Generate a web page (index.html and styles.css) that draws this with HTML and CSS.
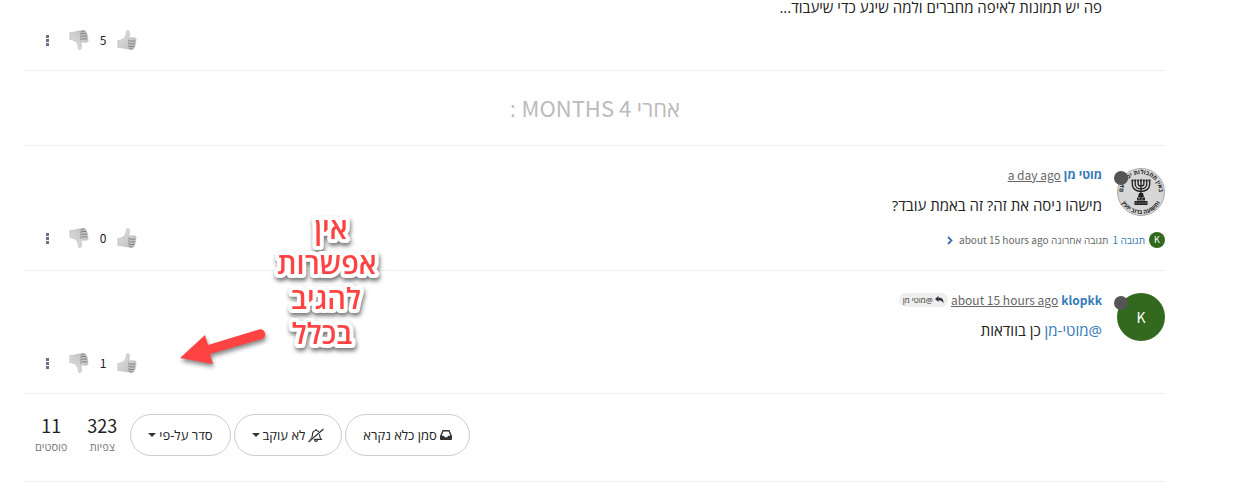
FILE: index.html
```html
<!DOCTYPE html>
<html lang="he" dir="rtl">
<head>
<meta charset="utf-8">
<title>פורום</title>
<link rel="stylesheet" href="styles.css">
</head>
<body>
<svg class="defs" aria-hidden="true">
  <defs>
    <linearGradient id="shade" x1="0" y1="0" x2="1" y2="1">
      <stop offset="0" stop-color="#e2e2e2"/><stop offset="1" stop-color="#bcbcbc"/>
    </linearGradient>
    <symbol id="thumb" viewBox="0 0 20 20">
      <path d="M.8 10.5c2-.3 4-.8 5.4-1.8C8 7.300 9.200 5 9.300 2.300 9.300.8 10 .3 10.800.4c1.400.2 2 1.600 1.800 3.400-.1 1.400-.6 2.700-.9 3.900l5.600.1c1.400.1 2 .9 1.900 1.900 0 .8-.4 1.200-.9 1.400.6.3.8.8.7 1.500-.1.700-.5 1.100-1 1.300.4.3.5.800.4 1.400-.1.700-.5 1-1 1.200.3.4.3.800.1 1.300-.4 1-1.200 1.300-2.600 1.300-3.600.1-6.500 0-8.700-1.100L.8 17.600z" fill="url(#shade)" stroke="#b5b5b5" stroke-width=".5"/>
      <path d="M18.200 11.100h-5.400c-1.100 0-1.500-.6-1.400-1.400M18 13.900h-5.200c-.9 0-1.300-.6-1.200-1.500M17.300 16.500h-4.500c-.8 0-1.200-.5-1.100-1.300M12 17.500c.2 1 .6 1.400 1.400 1.500h2.400" fill="none" stroke="#777" stroke-width=".9"/>
    </symbol>
  </defs>
</svg>

<main class="topic">
  <article class="post post-first">
    <p class="post-text">פה יש תמונות לאיפה מחברים ולמה שיגע כדי שיעבוד...</p>
    <footer class="post-footer">
      <div class="actions">
        <button class="icon-btn" aria-label="אהבתי"><svg class="thumb"><use href="#thumb"/></svg></button>
        <span class="votes">5</span>
        <button class="icon-btn" aria-label="לא אהבתי"><svg class="thumb thumb-down"><use href="#thumb"/></svg></button>
        <button class="icon-btn more" aria-label="עוד"><i></i><i></i><i></i></button>
      </div>
    </footer>
  </article>

  <h2 class="time-gap">אחרי <span class="latin">4 MONTHS</span> :</h2>

  <article class="post">
    <div class="avatar">
      <svg class="emblem" viewBox="0 0 48 48" aria-hidden="true">
        <circle cx="24" cy="24" r="23.500" fill="#d6d6d6" stroke="#aaa"/>
        <path id="ringTop" d="M9 34A18 18 0 1 1 39 34" fill="none"/>
        <path id="ringBottom" d="M2 24A22 22 0 0 0 46 24" fill="none"/>
        <text class="ring-text"><textPath href="#ringTop" startOffset="50%">באין תחבולות יפול עם</textPath></text>
        <text class="ring-text"><textPath href="#ringBottom" startOffset="50%">ותשועה ברוב יועץ</textPath></text>
        <g fill="none" stroke="#222" stroke-width="1.300">
          <path d="M15.300 12v4c0 10 17.400 10 17.400 0v-4M18.200 12v4c0 6.500 11.600 6.500 11.600 0v-4M21.100 12v3.500c0 3.500 5.800 3.500 5.800 0V12M24 11.500V32"/>
          <path d="M14.500 12.300H33.500" stroke-dasharray="2 .8" stroke-width="1.800"/>
        </g>
        <path d="M22 25h4l1 4h-6zM20 29.500h8v3h-8zM17.500 33h13v4h-13z" fill="#222"/>
        <path d="M18.500 35h11M21 31h6" stroke="#aaa" stroke-width=".7" stroke-dasharray="2 1"/>
      </svg>
      <span class="status"></span>
    </div>
    <div class="post-body">
      <header class="post-head">
        <a class="author" href="#">מוטי מן</a>
        <a class="when latin" href="#">a day ago</a>
      </header>
      <p class="post-text">מישהו ניסה את זה? זה באמת עובד?</p>
    </div>
    <footer class="post-footer">
      <a class="replies" href="#">
        <span class="mini-avatar latin">K</span>
        <span class="reply-count">תגובה <span class="latin">1</span></span>
        <span class="reply-last">תגובה אחרונה <span class="latin">about 15 hours ago</span></span>
        <svg class="chevron" viewBox="0 0 6 9"><path d="M1 1l3.500 3.500L1 8" fill="none" stroke="#3a6fb0" stroke-width="1.800"/></svg>
      </a>
      <div class="actions">
        <button class="icon-btn" aria-label="אהבתי"><svg class="thumb"><use href="#thumb"/></svg></button>
        <span class="votes">0</span>
        <button class="icon-btn" aria-label="לא אהבתי"><svg class="thumb thumb-down"><use href="#thumb"/></svg></button>
        <button class="icon-btn more" aria-label="עוד"><i></i><i></i><i></i></button>
      </div>
    </footer>
  </article>

  <article class="post">
    <div class="avatar avatar-letter latin">K<span class="status"></span></div>
    <div class="post-body">
      <header class="post-head">
        <a class="author latin" href="#">klopkk</a>
        <a class="when latin" href="#">about 15 hours ago</a>
        <a class="reply-to" href="#"><svg class="reply-icon" viewBox="0 0 9 8"><path d="M0 3L3.500 0v1.800C7 1.800 9 3 8.300 7.500 7.500 5 6 4.300 3.500 4.300V6z" fill="#333"/></svg><span>@מוטי מן</span></a>
      </header>
      <p class="post-text"><a class="mention" href="#">@מוטי-מן</a> כן בוודאות</p>
    </div>
    <footer class="post-footer">
      <div class="actions">
        <button class="icon-btn" aria-label="אהבתי"><svg class="thumb"><use href="#thumb"/></svg></button>
        <span class="votes">1</span>
        <button class="icon-btn" aria-label="לא אהבתי"><svg class="thumb thumb-down"><use href="#thumb"/></svg></button>
        <button class="icon-btn more" aria-label="עוד"><i></i><i></i><i></i></button>
      </div>
    </footer>
  </article>

  <div class="topic-bar">
    <div class="tools">
      <button class="pill"><svg class="inbox" viewBox="0 0 12 10"><path fill-rule="evenodd" d="M2.500 0h7L12 6v3.200a.8.8 0 0 1-.8.8H.8a.8.8 0 0 1-.8-.8V6zM3.300 1.500L1.700 5.700h2.200l.8 1.600h2.600l.8-1.600h2.200L8.700 1.500z" fill="#333"/></svg>סמן כלא נקרא</button>
      <button class="pill"><svg class="bell" viewBox="0 0 16 15"><path d="M2.800 11.300C4.500 9.800 4.500 8 4.500 6.300 4.600 4 6 2.700 8 2.500s3.400 1.600 3.500 3.800c0 2 .2 3.500 1.700 5zM8 2.500V1M6.700 12c.1 1.700 2.500 1.700 2.600 0" fill="none" stroke="#333" stroke-width="1.200"/><path d="M1 14.200L15.200 1.400" stroke="#fff" stroke-width="2.500"/><path d="M.5 14L15.500 1" stroke="#333" stroke-width="1.300"/></svg>לא עוקב<i class="caret"></i></button>
      <button class="pill">סדר על-פי<i class="caret"></i></button>
    </div>
    <div class="stats">
      <div class="stat"><span class="stat-num latin">323</span><span class="stat-label">צפיות</span></div>
      <div class="stat"><span class="stat-num latin">11</span><span class="stat-label">פוסטים</span></div>
    </div>
  </div>
</main>

<svg class="note" viewBox="0 0 120 160" role="img">
  <text x="64" y="34">אין</text>
  <text x="60" y="69">אפשרות</text>
  <text x="59" y="104">להגיב</text>
  <text x="55" y="139">בכלל</text>
</svg>
<svg class="arrow" viewBox="0 0 100 50" aria-hidden="true"><path d="M4 30L29 7l3 10L83 1.500a5 5 0 0 1 3 9.500L34 26l3 10z" fill="#ff4343"/></svg>
</body>
</html>
```
FILE: styles.css
```css
* { box-sizing: border-box; }
body {
  margin: 0;
  background: #fff;
  color: #222;
  font: 14px/20px "Open Sans", "Noto Sans", sans-serif;
  position: relative;
}
p, h2 { margin: 0; }
a { color: #337ab7; text-decoration: none; }
button { font: inherit; color: inherit; background: none; border: 0; padding: 0; cursor: pointer; }
svg { display: block; flex: none; }
.defs { position: absolute; width: 0; height: 0; }
.latin { font-family: "Noto Sans CJK SC", "Noto Sans", sans-serif; }

.topic { padding: 0 80px 0 25px; }
.post {
  display: grid;
  grid-template-columns: 48px 1fr;
  column-gap: 15px;
  padding: 19px 0 20px;
  border-bottom: 1px solid #eee;
}
.post-text { font-size: 15px; margin-top: 10px; }
.post-first { padding-top: 0; }
.post-first .post-text { grid-column: 2; line-height: 15px; margin: 0 0 2px; }
.post-footer {
  grid-column: 1 / -1;
  display: flex;
  align-items: flex-start;
  margin-top: 13px;
}
.actions { display: flex; align-items: center; gap: 9px; margin: 0 auto 0 20px; height: 20px; }
.votes { width: 10px; text-align: center; font: 12px/20px "Noto Sans CJK SC", sans-serif; }
.thumb { width: 20px; height: 20px; }
.thumb-down { transform: scaleY(-1); }
.more { display: flex; flex-direction: column; align-items: center; gap: 1px; width: 5px; margin-right: 10px; }
.more i { width: 3px; height: 3px; background: #6a6f8c; }

.time-gap {
  padding: 24px 0;
  border-bottom: 1px solid #eee;
  text-align: center;
  font-size: 22px;
  line-height: 25px;
  font-weight: 400;
  color: #bbb;
}

.avatar { position: relative; width: 48px; height: 48px; margin-top: 3px; margin-bottom: -5px; border-radius: 50%; }
.emblem { width: 48px; height: 48px; }
.ring-text { font: 700 6px "Open Sans", sans-serif; fill: #222; text-anchor: middle; }
.avatar-letter { background: #33691e; color: #fff; font-size: 14px; line-height: 48px; text-align: center; }
.status { position: absolute; top: 3px; left: -3px; width: 14px; height: 14px; border-radius: 50%; background: #555; }
.post-head { display: flex; align-items: center; gap: 3px; height: 20px; font-size: 12px; }
.author { font-weight: 700; }
.when { color: #666; text-decoration: underline; }
.reply-to {
  display: flex;
  align-items: center;
  gap: 2px;
  padding: 0 4px;
  border-radius: 7px;
  background: #eee;
  color: #333;
  font-size: 8px;
  line-height: 14px;
}
.reply-icon { width: 9px; height: 8px; }

.replies { display: flex; align-items: center; gap: 4px; padding-top: 2px; font-size: 10px; }
.mini-avatar { width: 16px; height: 16px; border-radius: 50%; background: #33691e; color: #fff; font-size: 9px; line-height: 16px; text-align: center; }
.reply-last { color: #666; }
.chevron { width: 6px; height: 9px; margin-right: 2px; }

.topic-bar {
  display: flex;
  justify-content: flex-end;
  align-items: center;
  gap: 13px;
  padding: 19px 0 24px 10px;
  border-bottom: 1px solid #eee;
}
.tools { display: flex; gap: 3px; }
.pill {
  display: flex;
  align-items: center;
  gap: 3px;
  height: 42px;
  padding: 0 17px;
  border: 1px solid #ccc;
  border-radius: 21px;
  font-size: 13px;
}
.inbox { width: 12px; height: 10px; }
.bell { width: 16px; height: 15px; }
.caret { border: 4px solid transparent; border-top-color: #333; border-bottom: 0; }
.stats { display: flex; gap: 20px; }
.stat { display: flex; flex-direction: column; align-items: center; min-width: 30px; }
.stat-num { font-size: 18px; line-height: 24px; }
.stat-label { font-size: 11px; line-height: 20px; color: #777; }

.note {
  position: absolute;
  top: 205px;
  left: 267px;
  width: 120px;
  height: 160px;
  font-size: 29px;
  font-weight: 600;
  text-anchor: middle;
  fill: #ff4343;
  stroke: #fff;
  stroke-width: 8px;
  stroke-linejoin: round;
  paint-order: stroke fill;
  filter: drop-shadow(1px 3px 2px #0008);
}
.arrow { position: absolute; top: 328px; left: 176px; width: 100px; height: 50px; filter: drop-shadow(1px 3px 2px #0007); }
```
